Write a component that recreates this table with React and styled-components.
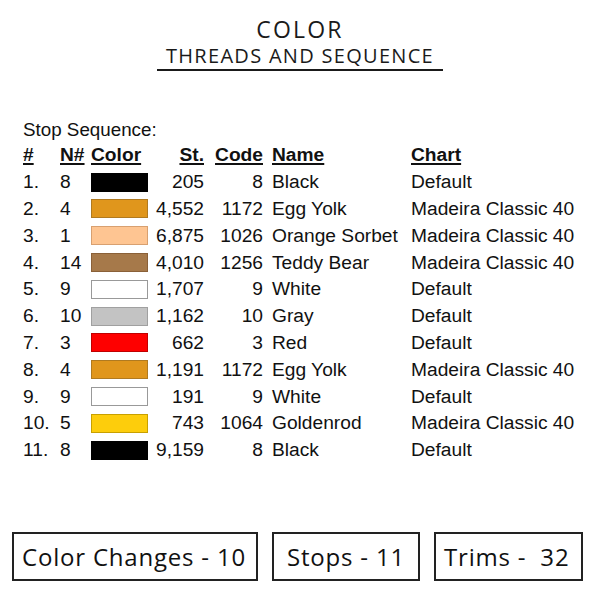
import React from 'react';
import styled, { createGlobalStyle } from 'styled-components';

const GlobalStyle = createGlobalStyle`
  html, body {
    margin: 0;
    padding: 0;
    background: #ffffff;
  }
`;

const Page = styled.div`
  width: 600px;
  height: 600px;
  display: flex;
  flex-direction: column;
  background: #ffffff;
  color: #111;
  box-sizing: border-box;
`;

const TitleBlock = styled.div`
  display: flex;
  flex-direction: column;
  align-items: center;
  padding-top: 16px;
  font-family: 'Open Sans', 'Liberation Sans', sans-serif;
  color: #1a1a1a;
`;

const Title = styled.div`
  font-size: 23px;
  line-height: 27px;
  font-weight: 500;
  letter-spacing: 2.2px;
`;

const SubTitle = styled.div`
  width: 286px;
  text-align: center;
  font-size: 20px;
  line-height: 24px;
  font-weight: 400;
  letter-spacing: 1.3px;
  padding-top: 1px;
  padding-bottom: 1px;
  border-bottom: 2px solid #1a1a1a;
`;

const Sequence = styled.div`
  padding: 48px 0 0 23px;
  font-family: 'Liberation Sans', Arial, sans-serif;
  font-size: 19.2px;
  color: #111;
`;

const Caption = styled.div`
  font-size: 18.8px;
  line-height: 22px;
  margin-bottom: 1px;
`;

const Grid = styled.div`
  display: grid;
  grid-template-columns: 37px 31px 57px 56px 59px 148px auto;
  grid-auto-rows: 26.8px;
  align-items: center;
`;

const Cell = styled.div`
  line-height: 22px;
  white-space: nowrap;
  text-align: ${(p) => (p.$right ? 'right' : 'left')};
  padding-left: ${(p) => (p.$indent ? '9px' : '0')};
`;

const Head = styled(Cell)`
  font-weight: bold;
  text-decoration: underline;
  text-decoration-thickness: 2px;
  text-underline-offset: 2px;
`;

const Swatch = styled.div`
  width: 57px;
  height: 19px;
  box-sizing: border-box;
  background: ${(p) => p.$color};
  border: 1px solid ${(p) => p.$edge || p.$color};
`;

const Footer = styled.div`
  margin-top: auto;
  display: flex;
  gap: 14px;
  padding: 0 0 19px 12px;
  font-family: 'Open Sans', 'Liberation Sans', sans-serif;
`;

const Stat = styled.div`
  width: ${(p) => p.$w}px;
  height: 49px;
  box-sizing: border-box;
  border: 2px solid #222;
  display: flex;
  align-items: center;
  justify-content: ${(p) => (p.$center ? 'center' : 'flex-start')};
  padding-left: ${(p) => (p.$center ? 0 : 8)}px;
  font-size: 24px;
  letter-spacing: 0.8px;
  color: #111;
  white-space: pre;
`;

const rows = [
  [8, '#000000', '205', '8', 'Black', 'Default'],
  [4, '#e0961c', '4,552', '1172', 'Egg Yolk', 'Madeira Classic 40', '#b07a20'],
  [1, '#fec592', '6,875', '1026', 'Orange Sorbet', 'Madeira Classic 40', '#d8a070'],
  [14, '#a6794a', '4,010', '1256', 'Teddy Bear', 'Madeira Classic 40', '#8a6038'],
  [9, '#ffffff', '1,707', '9', 'White', 'Default', '#999999'],
  [10, '#c3c3c3', '1,162', '10', 'Gray', 'Default', '#a0a0a0'],
  [3, '#fe0000', '662', '3', 'Red', 'Default', '#c00000'],
  [4, '#e0961c', '1,191', '1172', 'Egg Yolk', 'Madeira Classic 40', '#b07a20'],
  [9, '#ffffff', '191', '9', 'White', 'Default', '#999999'],
  [5, '#fdcd0c', '743', '1064', 'Goldenrod', 'Madeira Classic 40', '#c8a000'],
  [8, '#000000', '9,159', '8', 'Black', 'Default'],
];

export default function App() {
  return (
    <Page>
      <GlobalStyle />
      <TitleBlock>
        <Title>COLOR</Title>
        <SubTitle>THREADS AND SEQUENCE</SubTitle>
      </TitleBlock>
      <Sequence>
        <Caption>Stop Sequence:</Caption>
        <Grid>
          <Head>#</Head>
          <Head>N#</Head>
          <Head>Color</Head>
          <Head $right>St.</Head>
          <Head $right>Code</Head>
          <Head $indent>Name</Head>
          <Head>Chart</Head>
          {rows.map((r, i) => (
            <React.Fragment key={i}>
              <Cell>{i + 1}.</Cell>
              <Cell>{r[0]}</Cell>
              <Swatch $color={r[1]} $edge={r[6]} />
              <Cell $right>{r[2]}</Cell>
              <Cell $right>{r[3]}</Cell>
              <Cell $indent>{r[4]}</Cell>
              <Cell>{r[5]}</Cell>
            </React.Fragment>
          ))}
        </Grid>
      </Sequence>
      <Footer>
        <Stat $w={246}>Color Changes - 10</Stat>
        <Stat $w={148} $center>Stops - 11</Stat>
        <Stat $w={149}>Trims -  32</Stat>
      </Footer>
    </Page>
  );
}
